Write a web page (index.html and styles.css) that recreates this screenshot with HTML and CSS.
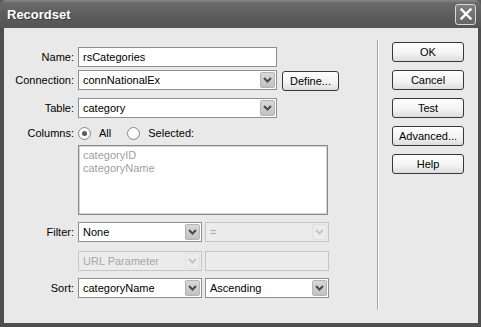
FILE: index.html
```html
<!DOCTYPE html>
<html lang="en">
<head>
  <meta charset="UTF-8">
  <title>Recordset</title>
  <link rel="stylesheet" href="styles.css">
</head>
<body>
  <div class="window">
    <div class="titlebar">
      <span class="title">Recordset</span>
      <span class="close">
        <svg width="12" height="12" viewBox="0 0 12 12"><path d="M1.5 1.5 L10.5 10.5 M10.5 1.5 L1.5 10.5" stroke="#fff" stroke-width="2.4" stroke-linecap="square"/></svg>
      </span>
    </div>

    <div class="body">
      <div class="form">
        <div class="row r-name">
          <span class="label">Name:</span>
          <div class="field w-wide">rsCategories</div>
        </div>
        <div class="row r-conn">
          <span class="label">Connection:</span>
          <div class="field select w-wide"><span class="value">connNationalEx</span><span class="arrow"><svg width="9" height="6" viewBox="0 0 9 6"><path d="M1 1 L4.5 4.5 L8 1" fill="none" stroke="#4a4a4a" stroke-width="2"/></svg></span></div>
          <span class="btn define">Define...</span>
        </div>
        <div class="row r-table">
          <span class="label">Table:</span>
          <div class="field select w-wide"><span class="value">category</span><span class="arrow"><svg width="9" height="6" viewBox="0 0 9 6"><path d="M1 1 L4.5 4.5 L8 1" fill="none" stroke="#4a4a4a" stroke-width="2"/></svg></span></div>
        </div>
        <div class="row r-cols">
          <span class="label">Columns:</span>
          <span class="radio checked"></span><span class="radio-text">All</span>
          <span class="radio"></span><span class="radio-text">Selected:</span>
        </div>
        <div class="row r-list">
          <span class="label"></span>
          <div class="listbox">
            <div class="item">categoryID</div>
            <div class="item">categoryName</div>
          </div>
        </div>
        <div class="row r-filter">
          <span class="label">Filter:</span>
          <div class="field select w-half"><span class="value">None</span><span class="arrow"><svg width="9" height="6" viewBox="0 0 9 6"><path d="M1 1 L4.5 4.5 L8 1" fill="none" stroke="#4a4a4a" stroke-width="2"/></svg></span></div>
          <div class="field select w-half disabled"><span class="value">=</span><span class="arrow"><svg width="9" height="6" viewBox="0 0 9 6"><path d="M1 1 L4.5 4.5 L8 1" fill="none" stroke="#c4c4c4" stroke-width="2"/></svg></span></div>
        </div>
        <div class="row r-param">
          <span class="label"></span>
          <div class="field select w-half disabled"><span class="value">URL Parameter</span><span class="arrow"><svg width="9" height="6" viewBox="0 0 9 6"><path d="M1 1 L4.5 4.5 L8 1" fill="none" stroke="#c4c4c4" stroke-width="2"/></svg></span></div>
          <div class="field w-half disabled"></div>
        </div>
        <div class="row r-sort">
          <span class="label">Sort:</span>
          <div class="field select w-half"><span class="value">categoryName</span><span class="arrow"><svg width="9" height="6" viewBox="0 0 9 6"><path d="M1 1 L4.5 4.5 L8 1" fill="none" stroke="#4a4a4a" stroke-width="2"/></svg></span></div>
          <div class="field select w-half"><span class="value">Ascending</span><span class="arrow"><svg width="9" height="6" viewBox="0 0 9 6"><path d="M1 1 L4.5 4.5 L8 1" fill="none" stroke="#4a4a4a" stroke-width="2"/></svg></span></div>
        </div>
      </div>

      <div class="sep"></div>

      <div class="buttons">
        <span class="btn">OK</span>
        <span class="btn">Cancel</span>
        <span class="btn">Test</span>
        <span class="btn">Advanced...</span>
        <span class="btn">Help</span>
      </div>
    </div>
  </div>
</body>
</html>
```

FILE: styles.css
```css
html, body {
  margin: 0;
  padding: 0;
  background: #5a5a5a;
}
body {
  font-family: 'Liberation Sans', Arial, sans-serif;
  font-size: 11px;
  color: #000;
}
.window {
  width: 481px;
  height: 327px;
  box-sizing: border-box;
  background: #4e4e4e;
  border-radius: 6px 6px 0 0;
  overflow: hidden;
}
.titlebar {
  height: 28px;
  display: flex;
  align-items: center;
  justify-content: space-between;
  padding: 0 5px 0 7px;
  background: linear-gradient(#888 0, #6a6a6a 3px, #5e5e5e 50%, #545454 100%);
}
.title {
  color: #fff;
  font-weight: bold;
  font-size: 13px;
  text-shadow: 1px 1px 0 #3c3c3c;
  margin-top: 1px;
}
.close {
  width: 19px;
  height: 19px;
  border: 1px solid #d8d8d8;
  border-radius: 3px;
  background: linear-gradient(#7e7e7e, #666);
  display: flex;
  align-items: center;
  justify-content: center;
}
.body {
  height: 295px;
  box-sizing: border-box;
  margin: 0 3px 0 4px;
  padding: 12px 0 13px;
  background: #e9e9e9;
  display: flex;
}
.form {
  width: 373px;
  padding-top: 7px;
}
.row {
  display: flex;
  align-items: center;
  height: 20px;
}
.label {
  width: 70px;
  margin-right: 4px;
  text-align: right;
  flex-shrink: 0;
}
.r-conn { margin-top: 3px; }
.r-table { margin-top: 8px; }
.r-cols { margin-top: 8px; height: 14px; }
.r-list { margin-top: 5px; height: 70px; align-items: stretch; }
.r-filter { margin-top: 7px; }
.r-param { margin-top: 9px; }
.r-sort { margin-top: 7px; }

.field {
  height: 20px;
  box-sizing: border-box;
  border: 1px solid #8e8e8e;
  background: #fff;
  padding-left: 4px;
  display: flex;
  align-items: center;
  white-space: nowrap;
}
.w-wide { width: 199px; }
.w-half { width: 124px; }
.w-half + .w-half { margin-left: 3px; }
.select { padding-right: 1px; }
.select .value { flex: 1; }
.arrow {
  width: 15px;
  height: 16px;
  box-sizing: border-box;
  border: 1px solid #b4b4b4;
  border-radius: 2px;
  background: linear-gradient(#d8d8d8, #c2c2c2);
  display: flex;
  align-items: center;
  justify-content: center;
}
.field.disabled {
  background: #ececec;
  border-color: #c6c6c6;
  color: #a6a6a6;
}
.disabled .arrow {
  background: #ececec;
  border-color: #e0e0e0;
}

.btn {
  box-sizing: border-box;
  height: 20px;
  border: 1px solid #383838;
  border-radius: 3px;
  background: linear-gradient(#fefefe, #f2f2f2 60%, #dcdcdc);
  display: flex;
  align-items: center;
  justify-content: center;
}
.define {
  width: 57px;
  margin-left: 5px;
  margin-top: 2px;
}

.radio {
  width: 13px;
  height: 13px;
  box-sizing: border-box;
  border: 1px solid #8a8a8a;
  border-radius: 50%;
  background: radial-gradient(circle at 40% 40%, #fff 40%, #e2e2e2);
  display: flex;
  align-items: center;
  justify-content: center;
}
.radio.checked::after {
  content: "";
  width: 5px;
  height: 5px;
  border-radius: 50%;
  background: #5a5a5a;
}
.radio-text { margin-left: 8px; }
.radio-text + .radio { margin-left: 16px; }

.listbox {
  width: 250px;
  box-sizing: border-box;
  border: 1px solid #8a8a8a;
  box-shadow: inset 0 0 0 1px #d4d4d4;
  background: #fff;
  padding: 3px 4px;
  color: #a0a0a0;
  line-height: 13px;
}

.sep {
  width: 0;
  border-left: 1px solid #a4a4a4;
  border-right: 1px solid #fff;
}
.buttons {
  margin-left: 13px;
  padding-top: 2px;
  display: flex;
  flex-direction: column;
  gap: 8px;
}
.buttons .btn { width: 72px; }
```
